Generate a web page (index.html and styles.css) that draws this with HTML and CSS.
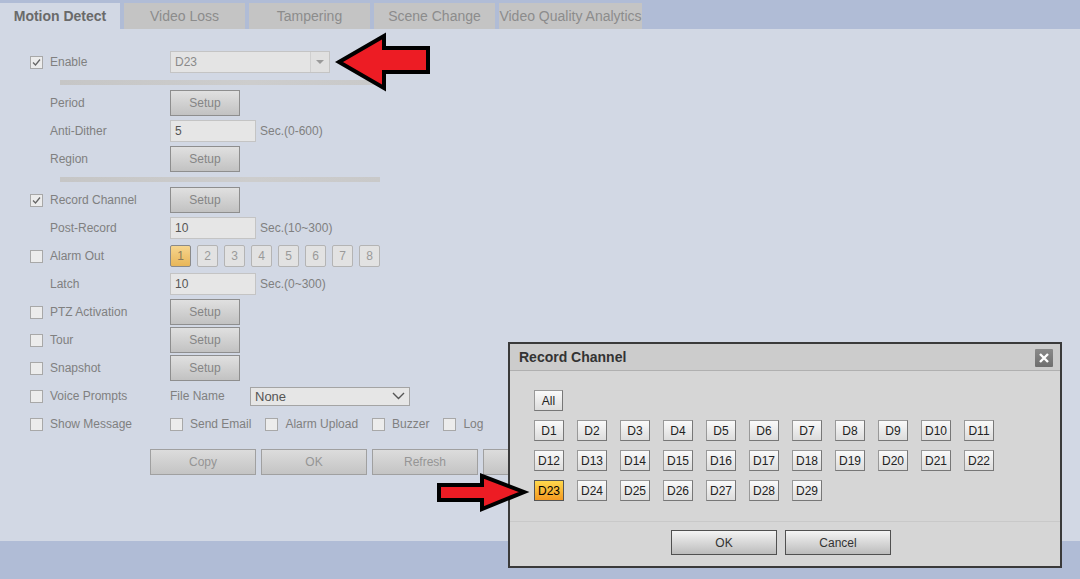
FILE: index.html
```html
<!DOCTYPE html>
<html>
<head>
    <link rel="stylesheet" href="styles.css">
</head>
<body>
    <div class="tabs">
        <div class="tab active">Motion Detect</div>
        <div class="tab">Video Loss</div>
        <div class="tab">Tampering</div>
        <div class="tab">Scene Change</div>
        <div class="tab wide">Video Quality Analytics</div>
    </div>

    <div class="panel">
        <div class="row">
            <span class="cb checked"><svg width="11" height="11" viewBox="0 0 11 11"><path d="M2 5.5 L4.5 8 L9 2.5" fill="none" stroke="#666" stroke-width="1.3"/></svg></span>
            <span class="label">Enable</span>
            <div class="ctrl">
                <div class="combo"><span class="combo-text">D23</span><span class="combo-btn"><i></i></span></div>
            </div>
        </div>
        <div class="sep"></div>
        <div class="row">
            <span class="label">Period</span>
            <div class="ctrl"><span class="btn setup">Setup</span></div>
        </div>
        <div class="row">
            <span class="label">Anti-Dither</span>
            <div class="ctrl"><span class="field">5</span><span class="hint">Sec.(0-600)</span></div>
        </div>
        <div class="row">
            <span class="label">Region</span>
            <div class="ctrl"><span class="btn setup">Setup</span></div>
        </div>
        <div class="sep"></div>
        <div class="row">
            <span class="cb checked"><svg width="11" height="11" viewBox="0 0 11 11"><path d="M2 5.5 L4.5 8 L9 2.5" fill="none" stroke="#666" stroke-width="1.3"/></svg></span>
            <span class="label">Record Channel</span>
            <div class="ctrl"><span class="btn setup">Setup</span></div>
        </div>
        <div class="row">
            <span class="label">Post-Record</span>
            <div class="ctrl"><span class="field">10</span><span class="hint">Sec.(10~300)</span></div>
        </div>
        <div class="row">
            <span class="cb"></span>
            <span class="label">Alarm Out</span>
            <div class="ctrl alarms">
                <span class="num on">1</span>
                <span class="num">2</span>
                <span class="num">3</span>
                <span class="num">4</span>
                <span class="num">5</span>
                <span class="num">6</span>
                <span class="num">7</span>
                <span class="num">8</span>
            </div>
        </div>
        <div class="row">
            <span class="label">Latch</span>
            <div class="ctrl"><span class="field">10</span><span class="hint">Sec.(0~300)</span></div>
        </div>
        <div class="row">
            <span class="cb"></span>
            <span class="label">PTZ Activation</span>
            <div class="ctrl"><span class="btn setup">Setup</span></div>
        </div>
        <div class="row">
            <span class="cb"></span>
            <span class="label">Tour</span>
            <div class="ctrl"><span class="btn setup">Setup</span></div>
        </div>
        <div class="row">
            <span class="cb"></span>
            <span class="label">Snapshot</span>
            <div class="ctrl"><span class="btn setup">Setup</span></div>
        </div>
        <div class="row">
            <span class="cb"></span>
            <span class="label">Voice Prompts</span>
            <div class="ctrl">
                <span class="sublabel">File Name</span>
                <div class="select"><span>None</span><svg width="13" height="8" viewBox="0 0 13 8"><path d="M1 1 L6.5 6.5 L12 1" fill="none" stroke="#555" stroke-width="1.4"/></svg></div>
            </div>
        </div>
        <div class="row">
            <span class="cb"></span>
            <span class="label">Show Message</span>
            <div class="ctrl checks">
                <span class="check"><span class="cb"></span>Send Email</span>
                <span class="check"><span class="cb"></span>Alarm Upload</span>
                <span class="check"><span class="cb"></span>Buzzer</span>
                <span class="check"><span class="cb"></span>Log</span>
            </div>
        </div>
        <div class="actions">
            <span class="btn big">Copy</span>
            <span class="btn big">OK</span>
            <span class="btn big">Refresh</span>
            <span class="btn big"></span>
        </div>
    </div>

    <div class="dialog">
        <div class="dlg-title">
            <span>Record Channel</span>
            <span class="close"><svg width="12" height="12" viewBox="0 0 12 12"><path d="M2 2 L10 10 M10 2 L2 10" stroke="#fff" stroke-width="2.4"/></svg></span>
        </div>
        <div class="dlg-body">
            <div class="ch-row"><span class="ch all">All</span></div>
            <div class="ch-row">
                <span class="ch">D1</span><span class="ch">D2</span><span class="ch">D3</span><span class="ch">D4</span><span class="ch">D5</span><span class="ch">D6</span><span class="ch">D7</span><span class="ch">D8</span><span class="ch">D9</span><span class="ch">D10</span><span class="ch">D11</span>
            </div>
            <div class="ch-row">
                <span class="ch">D12</span><span class="ch">D13</span><span class="ch">D14</span><span class="ch">D15</span><span class="ch">D16</span><span class="ch">D17</span><span class="ch">D18</span><span class="ch">D19</span><span class="ch">D20</span><span class="ch">D21</span><span class="ch">D22</span>
            </div>
            <div class="ch-row">
                <span class="ch sel">D23</span><span class="ch">D24</span><span class="ch">D25</span><span class="ch">D26</span><span class="ch">D27</span><span class="ch">D28</span><span class="ch">D29</span>
            </div>
        </div>
        <div class="dlg-foot">
            <span class="dbtn">OK</span>
            <span class="dbtn">Cancel</span>
        </div>
    </div>

    <!-- annotation arrows -->
    <svg class="arrow arrow-left" width="106" height="68" viewBox="0 0 106 68">
        <polygon points="9,34 54,8 54,20 98,20 98,44 54,44 54,60" fill="#ed1c24" stroke="#000" stroke-width="4"/>
    </svg>
    <svg class="arrow arrow-right" width="100" height="50" viewBox="0 0 100 50">
        <polygon points="7,17 50,17 50,8 92,24 50,41 50,32 7,32" fill="#ed1c24" stroke="#000" stroke-width="4"/>
    </svg>
</body>
</html>
```

FILE: styles.css
```css
body { margin: 0; background-color: #b0bcd6; font-family: "Liberation Sans", Arial, sans-serif; font-size: 12px; color: #808080; width: 1080px; height: 579px; overflow: hidden; position: relative; }

.tabs { display: flex; gap: 4px; height: 29px; padding-top: 3px; box-sizing: border-box; background-color: #b0bcd6; }
.tab { width: 121px; height: 26px; line-height: 26px; text-align: center; font-size: 14px; color: #8c8c8c; background-color: #c4c4c4; white-space: nowrap; }
.tab.active { width: 120px; background-color: #d2d8e4; color: #6a6a6a; font-weight: bold; }
.tab.wide { width: 143px; overflow: hidden; }

.panel { height: 512px; box-sizing: border-box; padding: 19px 0 0 30px; background-color: #d2d8e4; }
.row { display: grid; grid-template-columns: 20px 120px auto; align-items: center; height: 28px; }
.label { grid-column: 2; }
.ctrl { grid-column: 3; display: flex; align-items: center; }
.sep { width: 320px; height: 5px; margin: 4px 0 4px 30px; background: linear-gradient(to right, #c6c6c6, #cdcdcd 60%, #c9c9c9); }

.cb { display: inline-flex; align-items: center; justify-content: center; width: 13px; height: 13px; box-sizing: border-box; border: 1px solid #a8a8a8; background-color: #ececec; }

.combo { display: flex; width: 160px; height: 22px; box-sizing: border-box; border: 1px solid #c4c4c4; background-color: #e4e4e4; }
.combo-text { flex: 1; line-height: 20px; padding-left: 4px; color: #8a8a8a; }
.combo-btn { width: 18px; border-left: 1px solid #cfcfcf; display: flex; align-items: center; justify-content: center; background-color: #e0e0e0; }
.combo-btn i { width: 0; height: 0; border-left: 4px solid transparent; border-right: 4px solid transparent; border-top: 4px solid #9a9a9a; }

.btn { display: inline-flex; align-items: center; justify-content: center; box-sizing: border-box; border: 1px solid #8e8e8e; background: linear-gradient(#e0e0e0, #c2c2c2); color: #858585; }
.btn.setup { width: 70px; height: 26px; }
.btn.big { width: 106px; height: 26px; border-color: #a0a0a0; background: linear-gradient(#dcdcdc, #c4c4c4); color: #959595; }

.field { width: 86px; height: 22px; box-sizing: border-box; border: 1px solid #c4c4c4; background-color: #e6e6e6; line-height: 20px; padding-left: 4px; color: #555; }
.hint { margin-left: 4px; }

.alarms { gap: 6px; }
.num { display: inline-flex; align-items: center; justify-content: center; width: 21px; height: 22px; box-sizing: border-box; border: 1px solid #b4b4b4; border-radius: 2px; background-color: #e2e2e2; color: #9a9a9a; }
.num.on { border-color: #8a8a8a; background: linear-gradient(#f6d58e, #e8b658); color: #8a7a5a; }

.sublabel { width: 80px; }
.select { display: flex; align-items: center; justify-content: space-between; width: 160px; height: 19px; box-sizing: border-box; border: 1px solid #a4a4a4; background-color: #e6e6e6; padding: 0 4px 0 4px; font-size: 13px; color: #555; }

.checks { gap: 14px; }
.check { display: inline-flex; align-items: center; gap: 7px; }

.actions { display: flex; gap: 5px; margin: 11px 0 0 120px; }

.dialog { position: absolute; left: 508px; top: 342px; width: 554px; height: 226px; box-sizing: border-box; border: 2px solid #3a3a3a; background-color: #d6d6d6; }
.dlg-title { display: flex; align-items: center; justify-content: space-between; height: 27px; box-sizing: border-box; padding: 0 7px 0 9px; border-bottom: 1px solid #b0b0b0; background-color: #cccccc; font-size: 14px; font-weight: bold; color: #333; }
.close { display: flex; align-items: center; justify-content: center; width: 18px; height: 18px; margin-top: 2px; background: linear-gradient(#8a8a8a, #6e6e6e); border-radius: 1px; }
.dlg-body { height: 151px; box-sizing: border-box; padding: 19px 0 0 24px; display: flex; flex-direction: column; gap: 9px; border-bottom: 1px solid #c9c9c9; }
.ch-row { display: flex; gap: 13px; }
.ch { display: inline-flex; align-items: center; justify-content: center; width: 30px; height: 21px; box-sizing: border-box; border: 1px solid #999; border-right-color: #777; border-bottom-color: #777; background: linear-gradient(#fafafa, #dcdcdc); color: #222; }
.ch.all { width: 29px; }
.ch.sel { background: linear-gradient(#ffd84c, #f49a22); border-color: #555; color: #000; }
.dlg-foot { display: flex; gap: 8px; padding: 8px 0 0 161px; }
.dbtn { display: inline-flex; align-items: center; justify-content: center; width: 106px; height: 25px; box-sizing: border-box; border: 1px solid #505050; background: linear-gradient(#f4f4f4, #bcbcbc); color: #333; }

.arrow { position: absolute; }
.arrow-left { left: 330px; top: 28px; }
.arrow-right { left: 432px; top: 468px; }
```
